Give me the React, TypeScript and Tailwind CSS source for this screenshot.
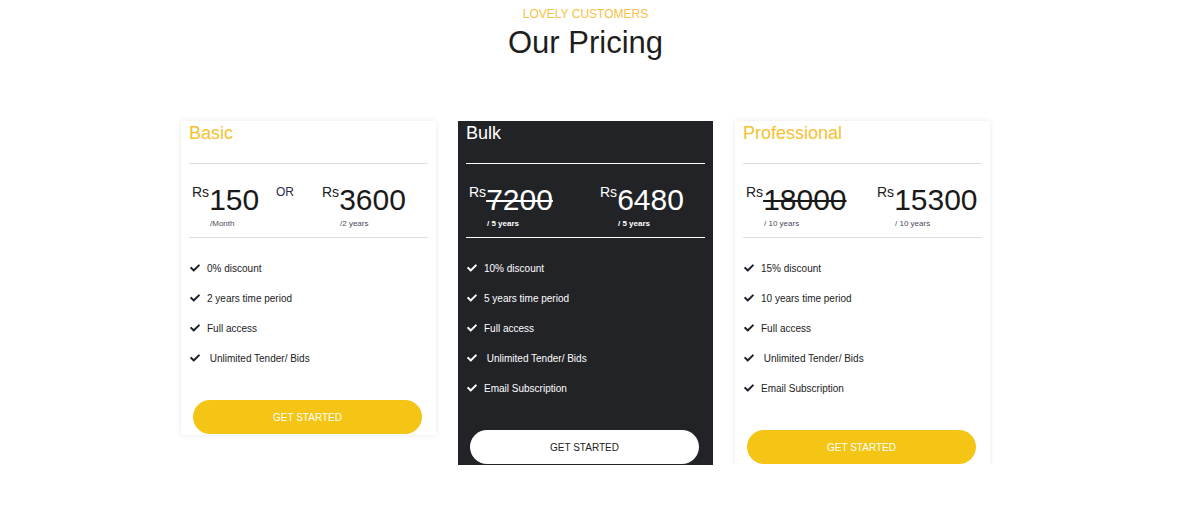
import React from "react";
import { FaCheck } from "react-icons/fa";

type Price = { amount: string; label: string; strike?: boolean };
type Plan = {
  name: string;
  dark: boolean;
  prices: Price[];
  or?: boolean;
  features: string[];
};

const plans: Plan[] = [
  {
    name: "Basic",
    dark: false,
    or: true,
    prices: [
      { amount: "150", label: "/Month" },
      { amount: "3600", label: "/2 years" },
    ],
    features: ["0% discount", "2 years time period", "Full access", "\u00a0Unlimited Tender/ Bids"],
  },
  {
    name: "Bulk",
    dark: true,
    prices: [
      { amount: "7200", label: "/ 5 years", strike: true },
      { amount: "6480", label: "/ 5 years" },
    ],
    features: [
      "10% discount",
      "5 years time period",
      "Full access",
      "\u00a0Unlimited Tender/ Bids",
      "Email Subscription",
    ],
  },
  {
    name: "Professional",
    dark: false,
    prices: [
      { amount: "18000", label: "/ 10 years", strike: true },
      { amount: "15300", label: "/ 10 years" },
    ],
    features: [
      "15% discount",
      "10 years time period",
      "Full access",
      "\u00a0Unlimited Tender/ Bids",
      "Email Subscription",
    ],
  },
];

function PriceCol({ p, dark, width }: { p: Price; dark: boolean; width: string }) {
  return (
    <div className={width}>
      <div className="flex items-start">
        <span className={`text-[14px] leading-none ${dark ? "text-white" : "text-[#222]"}`}>Rs</span>
        <span
          className={`text-[30px] leading-none ${dark ? "text-white decoration-white" : "text-[#1a1a1a] decoration-[#1a1a1a]"} ${
            p.strike ? "line-through decoration-2" : ""
          }`}
        >
          {p.amount}
        </span>
      </div>
      <div
        className={`mt-[4px] ml-[18px] text-[8px] leading-[10px] ${
          dark ? "text-white font-bold" : "text-[#4a4a60]"
        }`}
      >
        {p.label}
      </div>
    </div>
  );
}

function Card({ plan }: { plan: Plan }) {
  const d = plan.dark;
  return (
    <div
      className={`w-[255px] px-[8px] pt-[3px] pb-[1px] ${
        d ? "bg-[#222327]" : "bg-white shadow-[0_0_6px_rgba(0,0,0,0.09)]"
      }`}
    >
      <div className={`text-[18px] leading-[18px] mb-[21px] ${d ? "text-white" : "text-[#f5c12e]"}`}>
        {plan.name}
      </div>
      <div className={`border-t ${d ? "border-white" : "border-[#dedede]"}`} />
      <div className="flex items-start pt-[21px] pb-[8px] pl-[3px]">
        {plan.or ? (
          <>
            <PriceCol p={plan.prices[0]} dark={d} width="w-[84px]" />
            <div className="w-[46px] text-[12px] leading-none text-[#2b2b4a] pt-[1px]">OR</div>
            <PriceCol p={plan.prices[1]} dark={d} width="w-[100px]" />
          </>
        ) : (
          <>
            <PriceCol p={plan.prices[0]} dark={d} width="w-[131px]" />
            <PriceCol p={plan.prices[1]} dark={d} width="w-[100px]" />
          </>
        )}
      </div>
      <div className={`border-t ${d ? "border-white" : "border-[#dedede]"}`} />
      <ul className="pt-[15px]">
        {plan.features.map((f) => (
          <li key={f} className="h-[30px] flex items-center pl-[1px]">
            <FaCheck className={`w-[10px] h-[10px] ${d ? "text-white" : "text-[#1f1f2a]"}`} />
            <span className={`ml-[7px] text-[10px] ${d ? "text-white" : "text-[#222]"}`}>{f}</span>
          </li>
        ))}
      </ul>
      <button
        className={`mt-[27px] ml-[4px] w-[229px] h-[34px] rounded-full text-[10px] flex items-center justify-center ${
          d ? "bg-white text-[#222]" : "bg-[#f4c514] text-white"
        }`}
      >
        GET STARTED
      </button>
    </div>
  );
}

export default function App() {
  return (
    <div className="w-[1171px] bg-white font-['Liberation_Sans',Arial,sans-serif]">
      <div className="pt-[7px] text-center">
        <div className="text-[12px] leading-[14px] text-[#f4c33f]">LOVELY CUSTOMERS</div>
        <h2 className="mt-[4px] text-[31px] leading-[36px] text-[#1e1e1e]">Our Pricing</h2>
      </div>
      <div className="mt-[60px] flex items-start justify-center gap-[22px]">
        {plans.map((p) => (
          <Card key={p.name} plan={p} />
        ))}
      </div>
    </div>
  );
}
